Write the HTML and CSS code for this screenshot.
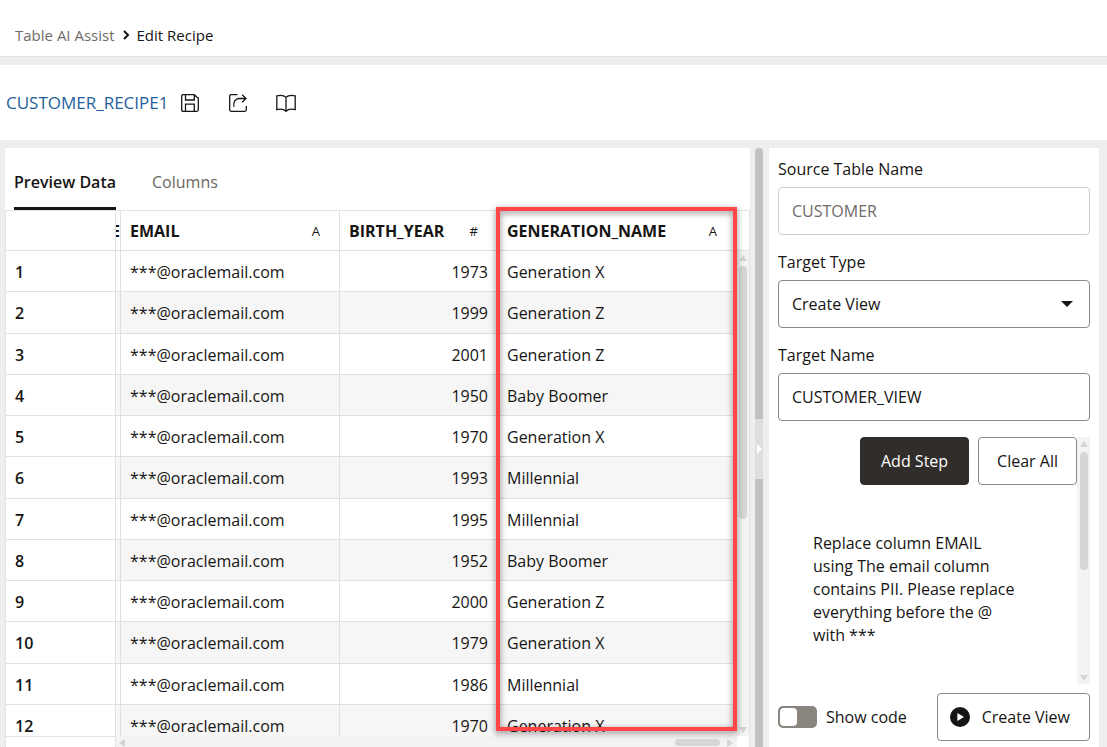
FILE: index.html
```html
<!DOCTYPE html>
<html lang="en">
<head>
<meta charset="utf-8">
<title>Edit Recipe</title>
<link rel="stylesheet" href="styles.css">
</head>
<body>
<header class="crumbs">
  <nav class="crumb-list" aria-label="Breadcrumb">
    <a class="crumb-link" href="#">Table AI Assist</a>
    <svg class="crumb-sep" viewBox="0 0 8 12" aria-hidden="true"><path d="M2 2l4 4-4 4"/></svg>
    <span>Edit Recipe</span>
  </nav>
</header>

<section class="toolbar">
  <a class="recipe-name" href="#">CUSTOMER_RECIPE1</a>
  <div class="tools">
    <button class="tool" type="button" aria-label="Save">
      <svg viewBox="0 0 20 20"><path d="M1.7 3.2Q1.7 1.7 3.2 1.7H14.2L18.3 5.2V16.8Q18.3 18.3 16.8 18.3H3.2Q1.7 18.3 1.7 16.8ZM5.5 1.7V7H14.3V1.7M5.5 18.3V11.2H14.3V18.3"/></svg>
    </button>
    <button class="tool" type="button" aria-label="Export">
      <svg viewBox="0 0 20 20"><path d="M9.5 1.7H3.2Q1.7 1.7 1.7 3.2V16.8Q1.7 18.3 3.2 18.3H16.8Q18.3 18.3 18.3 16.8V13M6 13.8C4.8 9 7.5 5.5 11 5.5H18M14.2 1.7L18 5.5L14.2 9.3"/></svg>
    </button>
    <button class="tool" type="button" aria-label="Documentation">
      <svg viewBox="0 0 20 20"><path d="M10 4.2C8 2.4 4 2.1 .8 2.8V16.6C4 15.9 8 16.2 10 18.4C12 16.2 16 15.9 19.2 16.6V2.8C16 2.1 12 2.4 10 4.2ZM10 4.2V18.4"/></svg>
    </button>
  </div>
</section>

<main class="workspace">
  <section class="preview">
    <div class="tabs" role="tablist">
      <button class="tab tab-active" type="button" role="tab" aria-selected="true">Preview Data</button>
      <button class="tab" type="button" role="tab" aria-selected="false">Columns</button>
    </div>
    <div class="grid">
      <div class="grid-view">
        <table class="data">
          <colgroup><col class="c-num"><col class="c-sliver"><col class="c-email"><col class="c-year"><col></colgroup>
          <thead>
            <tr>
              <th></th>
              <th class="sliver"><div class="clip">E</div></th>
              <th><div class="head"><span>EMAIL</span><span class="kind">A</span></div></th>
              <th><div class="head head-year"><span>BIRTH_YEAR</span><span class="kind">#</span></div></th>
              <th><div class="head"><span>GENERATION_NAME</span><span class="kind">A</span></div></th>
            </tr>
          </thead>
          <tbody>
            <tr><th>1</th><td></td><td>***@oraclemail.com</td><td class="num">1973</td><td>Generation X</td></tr>
            <tr><th>2</th><td></td><td>***@oraclemail.com</td><td class="num">1999</td><td>Generation Z</td></tr>
            <tr><th>3</th><td></td><td>***@oraclemail.com</td><td class="num">2001</td><td>Generation Z</td></tr>
            <tr><th>4</th><td></td><td>***@oraclemail.com</td><td class="num">1950</td><td>Baby Boomer</td></tr>
            <tr><th>5</th><td></td><td>***@oraclemail.com</td><td class="num">1970</td><td>Generation X</td></tr>
            <tr><th>6</th><td></td><td>***@oraclemail.com</td><td class="num">1993</td><td>Millennial</td></tr>
            <tr><th>7</th><td></td><td>***@oraclemail.com</td><td class="num">1995</td><td>Millennial</td></tr>
            <tr><th>8</th><td></td><td>***@oraclemail.com</td><td class="num">1952</td><td>Baby Boomer</td></tr>
            <tr><th>9</th><td></td><td>***@oraclemail.com</td><td class="num">2000</td><td>Generation Z</td></tr>
            <tr><th>10</th><td></td><td>***@oraclemail.com</td><td class="num">1979</td><td>Generation X</td></tr>
            <tr><th>11</th><td></td><td>***@oraclemail.com</td><td class="num">1986</td><td>Millennial</td></tr>
            <tr><th>12</th><td></td><td>***@oraclemail.com</td><td class="num">1970</td><td>Generation X</td></tr>
          </tbody>
        </table>
      </div>
      <div class="grid-side">
        <div class="grid-side-head"></div>
        <div class="vbar">
          <span class="arrow arrow-up"></span>
          <span class="thumb thumb-grid"></span>
          <span class="arrow arrow-down"></span>
        </div>
      </div>
      <div class="grid-foot">
        <div class="foot-fixed"></div>
        <div class="hbar">
          <span class="arrow arrow-left"></span>
          <span class="thumb-h"></span>
          <span class="arrow arrow-right"></span>
        </div>
      </div>
      <div class="highlight"></div>
    </div>
  </section>

  <div class="splitter">
    <div class="split-bar split-top"></div>
    <button class="split-handle" type="button" aria-label="Collapse panel"><span class="split-arrow"></span></button>
    <div class="split-bar split-bottom"></div>
  </div>

  <aside class="side">
    <div class="field">
      <label for="source">Source Table Name</label>
      <input class="control" id="source" type="text" value="CUSTOMER" disabled>
    </div>
    <div class="field">
      <label for="type">Target Type</label>
      <div class="select-wrap">
        <select class="control" id="type"><option>Create View</option></select>
        <span class="caret"></span>
      </div>
    </div>
    <div class="field">
      <label for="target">Target Name</label>
      <input class="control" id="target" type="text" value="CUSTOMER_VIEW">
    </div>
    <div class="steps">
      <div class="steps-body">
        <div class="steps-actions">
          <button class="btn btn-dark" type="button">Add Step</button>
          <button class="btn" type="button">Clear All</button>
        </div>
        <p class="step-text">Replace column EMAIL using The email column contains PII. Please replace everything before the @ with ***</p>
      </div>
      <div class="vbar">
        <span class="arrow arrow-up"></span>
        <span class="thumb thumb-steps"></span>
        <span class="arrow arrow-down"></span>
      </div>
    </div>
    <div class="side-foot">
      <label class="switch-label"><input class="switch" type="checkbox" role="switch">Show code</label>
      <button class="btn btn-create" type="button">
        <svg class="play" viewBox="0 0 20 20" aria-hidden="true"><circle cx="10" cy="10" r="10"/><path d="M7.4 6L14 10L7.4 14Z"/></svg>
        Create View
      </button>
    </div>
  </aside>
</main>
</body>
</html>
```
FILE: styles.css
```css
* { box-sizing: border-box; }

body {
  margin: 0;
  height: 100vh;
  display: flex;
  flex-direction: column;
  gap: 8px;
  overflow: hidden;
  background: #efeeec;
  color: #161513;
  font: 16px/24px "Open Sans", "Noto Sans", sans-serif;
}

button, input, select { font: inherit; color: inherit; }
button { cursor: pointer; }

.crumbs {
  background: #fff;
  border-bottom: 1px solid #e3e1df;
  padding: 23px 15px 9px;
  font-size: 15px;
}
.crumb-list { display: flex; align-items: center; gap: 7px; }
.crumb-link { color: #6f6b68; text-decoration: none; }
.crumb-sep { width: 8px; height: 12px; fill: none; stroke: #161513; stroke-width: 2; }

.toolbar {
  display: flex;
  align-items: center;
  gap: 12px;
  height: 75px;
  flex: none;
  padding: 0 6px;
  background: #fff;
}
.recipe-name { color: #1f5f9e; font-size: 17px; text-decoration: none; }
.tools { display: flex; gap: 28px; }
.tool { width: 20px; height: 20px; padding: 0; border: 0; background: none; }
.tool svg { display: block; width: 20px; height: 20px; fill: none; stroke: #161513; stroke-width: 1.3; }

.workspace { flex: 1; min-height: 0; display: flex; padding: 0 8px 0 5px; }

.preview { flex: 1; min-width: 0; display: flex; flex-direction: column; background: #fff; }
.tabs { display: flex; gap: 36px; height: 62px; flex: none; padding: 9px 9px 0; }
.tab {
  padding: 0;
  border: 0;
  border-bottom: 3px solid transparent;
  background: none;
  color: #6a6764;
  font-weight: 500;
}
.tab-active { color: #161513; border-bottom-color: #161513; font-weight: 600; }

.grid {
  position: relative;
  flex: 1;
  min-height: 0;
  display: grid;
  grid-template-columns: 1fr 13px;
  grid-template-rows: 1fr 11px;
  border: solid #e3e3e3;
  border-width: 1px 1px 0;
}
.grid-view { min-width: 0; min-height: 0; overflow: hidden; }

.data {
  width: 100%;
  height: 535px;
  table-layout: fixed;
  border-collapse: separate;
  border-spacing: 0;
}
.c-num { width: 110px; }
.c-sliver { width: 5px; }
.c-email { width: 219px; }
.c-year { width: 158px; }
.data th, .data td {
  padding: 0 9px;
  border: solid #e0e0e0;
  border-width: 0 1px 1px 0;
  text-align: left;
  white-space: nowrap;
}
.data thead th { height: 40px; font-weight: 700; }
.data tbody th, .data tbody td { padding-top: 2px; }
.data th:nth-child(2), .data td:nth-child(2) { padding: 0; }
.data tbody th { font-weight: 600; }
.data tbody tr:nth-child(even) td { background: #f6f6f6; }
.data tr > :last-child { border-right: 0; }
.data .num { text-align: right; }
.clip { display: flex; justify-content: flex-end; width: 4px; overflow: hidden; }
.head { display: flex; justify-content: space-between; align-items: center; padding-right: 10px; }
.kind { font-size: 13px; font-weight: 400; }

.grid-side { display: flex; flex-direction: column; }
.grid-side-head { height: 40px; border-bottom: 1px solid #e3e3e3; }
.vbar {
  flex: 1;
  display: flex;
  flex-direction: column;
  align-items: center;
  background: #f3f3f3;
  padding: 4px 0 3px;
}
.arrow { border: 4px solid transparent; width: 0; height: 0; }
.arrow-up { border-top: 0; border-bottom: 6px solid #d4d4d2; }
.arrow-down { border-bottom: 0; border-top: 6px solid #d4d4d2; margin-top: auto; }
.arrow-left { border-left: 0; border-right: 6px solid #d4d4d2; margin-right: auto; }
.arrow-right { border-right: 0; border-left: 6px solid #d4d4d2; }
.thumb { width: 8px; margin-top: 5px; border-radius: 4px; background: #d6d6d4; }
.thumb-grid { height: 53%; }
.thumb-steps { height: 118px; }

.grid-foot { grid-column: 1 / -1; display: flex; padding-right: 12px; }
.foot-fixed { width: 110px; border: solid #e3e3e3; border-width: 1px 1px 0 0; }
.hbar { flex: 1; display: flex; align-items: center; gap: 7px; padding: 2px 4px 0 3px; background: #f3f3f3; }
.thumb-h { width: 45px; height: 7px; border-radius: 4px; background: #d6d6d4; }

/* Call-out frame over the generated column */
.highlight {
  position: absolute;
  top: -4px;
  right: 12px;
  bottom: 16px;
  left: 490px;
  border: 4px solid #ff4545;
  filter: drop-shadow(0 2px 3px rgba(0, 0, 0, .5));
  pointer-events: none;
}

.splitter { width: 19px; flex: none; display: flex; flex-direction: column; align-items: center; padding-right: 1px; }
.split-bar { width: 8px; background: #c1c1c1; }
.split-top { height: 271px; border-radius: 4px 4px 0 0; }
.split-bottom { flex: 1; }
.split-handle { width: 8px; height: 60px; padding: 0 0 0 2px; border: 0; background: #dedede; }
.split-arrow { display: block; border: 5px solid transparent; border-left-color: #fff; border-right: 0; width: 0; }

.side {
  width: 330px;
  flex: none;
  display: flex;
  flex-direction: column;
  padding: 9px 9px 6px;
  background: #fff;
}
.field { display: flex; flex-direction: column; gap: 6px; margin-bottom: 15px; }
.control {
  width: 100%;
  height: 48px;
  padding: 0 13px;
  border: 1px solid #8b8886;
  border-radius: 4px;
  background: #fff;
  appearance: none;
}
.control:disabled { color: #6f6b68; border-color: #cfcdcc; opacity: 1; }
.select-wrap { position: relative; }
.select-wrap .control { display: block; }
.caret {
  position: absolute;
  top: 21px;
  right: 17px;
  border: 6px solid transparent;
  border-top-color: #161513;
  border-bottom: 0;
  pointer-events: none;
}

.steps { flex: 1; min-height: 0; display: flex; margin-top: 1px; }
.steps-body { flex: 1; }
.steps .vbar { flex: 0 0 13px; }
.steps-actions { display: flex; justify-content: flex-end; gap: 9px; }
.btn {
  height: 48px;
  padding: 0 18px;
  border: 1px solid #8b8886;
  border-radius: 4px;
  background: #fff;
}
.btn-dark { padding: 0 20px; border-color: #312d2a; background: #312d2a; color: #fff; }
.step-text { width: 210px; margin: 47px 0 0 35px; line-height: 23px; }

.side-foot { display: flex; align-items: center; justify-content: space-between; padding-top: 9px; }
.switch-label { display: flex; align-items: center; gap: 9px; }
.switch {
  appearance: none;
  display: flex;
  width: 39px;
  height: 22px;
  margin: 0;
  padding: 2px;
  border-radius: 5px;
  background: #8b8580;
}
.switch::before { content: ""; width: 17px; height: 18px; border-radius: 4px; background: #fff; }
.switch:checked::before { margin-left: auto; }
.btn-create { display: flex; align-items: center; gap: 12px; padding: 0 19px 0 12px; }
.play { width: 20px; height: 20px; fill: #161513; }
.play path { fill: #fff; }
```
